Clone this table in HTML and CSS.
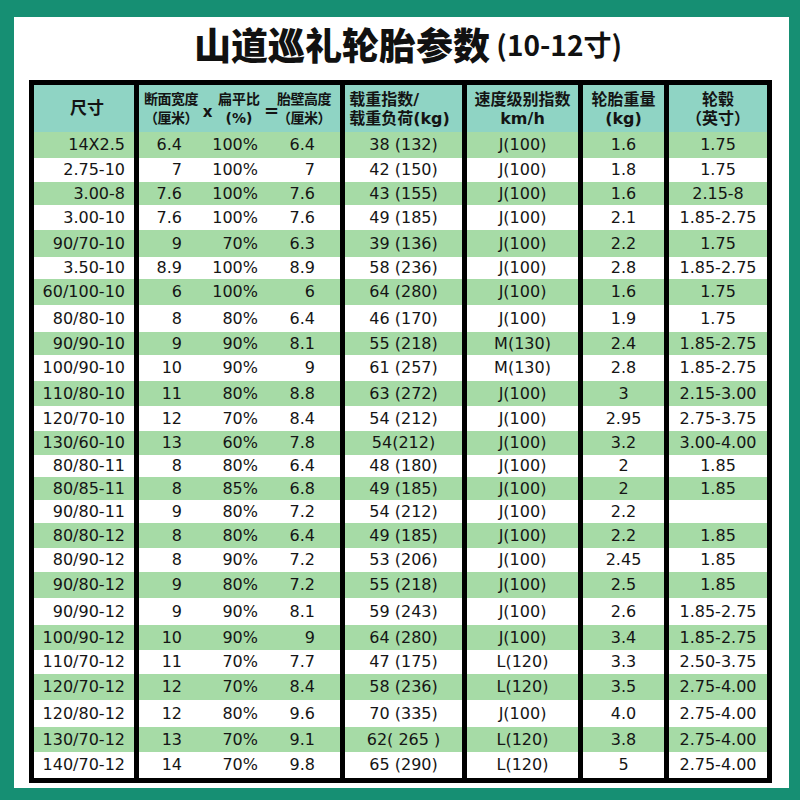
FILE: index.html
```html
<!DOCTYPE html>
<html lang="zh-CN">
<head>
<meta charset="utf-8">
<title>山道巡礼轮胎参数</title>
<link rel="stylesheet" href="styles.css">
</head>
<body>
<div class="card">
  <h1 class="title">山道巡礼轮胎参数<span class="sub"> (10-12寸)</span></h1>
  <div class="table">
    <div class="row head">
      <div class="c c1 hd"><span class="big">尺寸</span></div>
      <div class="c cg hd">
        <div class="lab l1">断面宽度<br>（厘米）</div>
        <div class="op opx">x</div>
        <div class="lab l2">扁平比<br>(%)</div>
        <div class="op opeq">=</div>
        <div class="lab l3">胎壁高度<br>（厘米）</div>
      </div>
      <div class="c c5 hd"><div class="lft">载重指数/<br>载重负荷(kg)</div></div>
      <div class="c c6 hd">速度级别指数<br>km/h</div>
      <div class="c c7 hd">轮胎重量<br>(kg)</div>
      <div class="c c8 hd">轮毂<br>（英寸）</div>
    </div>

    <div class="row g h26"><div class="c c1">14X2.5</div><div class="c c2">6.4</div><div class="c c3">100%</div><div class="c c4">6.4</div><div class="c c5">38 (132)</div><div class="c c6">J(100)</div><div class="c c7">1.6</div><div class="c c8">1.75</div></div>
    <div class="row h24"><div class="c c1">2.75-10</div><div class="c c2">7</div><div class="c c3">100%</div><div class="c c4">7</div><div class="c c5">42 (150)</div><div class="c c6">J(100)</div><div class="c c7">1.8</div><div class="c c8">1.75</div></div>
    <div class="row g h23"><div class="c c1">3.00-8</div><div class="c c2">7.6</div><div class="c c3">100%</div><div class="c c4">7.6</div><div class="c c5">43 (155)</div><div class="c c6">J(100)</div><div class="c c7">1.6</div><div class="c c8">2.15-8</div></div>
    <div class="row h25"><div class="c c1">3.00-10</div><div class="c c2">7.6</div><div class="c c3">100%</div><div class="c c4">7.6</div><div class="c c5">49 (185)</div><div class="c c6">J(100)</div><div class="c c7">2.1</div><div class="c c8">1.85-2.75</div></div>
    <div class="row g h27"><div class="c c1">90/70-10</div><div class="c c2">9</div><div class="c c3">70%</div><div class="c c4">6.3</div><div class="c c5">39 (136)</div><div class="c c6">J(100)</div><div class="c c7">2.2</div><div class="c c8">1.75</div></div>
    <div class="row h22"><div class="c c1">3.50-10</div><div class="c c2">8.9</div><div class="c c3">100%</div><div class="c c4">8.9</div><div class="c c5">58 (236)</div><div class="c c6">J(100)</div><div class="c c7">2.8</div><div class="c c8">1.85-2.75</div></div>
    <div class="row g h26"><div class="c c1">60/100-10</div><div class="c c2">6</div><div class="c c3">100%</div><div class="c c4">6</div><div class="c c5">64 (280)</div><div class="c c6">J(100)</div><div class="c c7">1.6</div><div class="c c8">1.75</div></div>
    <div class="row h27"><div class="c c1">80/80-10</div><div class="c c2">8</div><div class="c c3">80%</div><div class="c c4">6.4</div><div class="c c5">46 (170)</div><div class="c c6">J(100)</div><div class="c c7">1.9</div><div class="c c8">1.75</div></div>
    <div class="row g h23"><div class="c c1">90/90-10</div><div class="c c2">9</div><div class="c c3">90%</div><div class="c c4">8.1</div><div class="c c5">55 (218)</div><div class="c c6">M(130)</div><div class="c c7">2.4</div><div class="c c8">1.85-2.75</div></div>
    <div class="row h26"><div class="c c1">100/90-10</div><div class="c c2">10</div><div class="c c3">90%</div><div class="c c4">9</div><div class="c c5">61 (257)</div><div class="c c6">M(130)</div><div class="c c7">2.8</div><div class="c c8">1.85-2.75</div></div>
    <div class="row g h25"><div class="c c1">110/80-10</div><div class="c c2">11</div><div class="c c3">80%</div><div class="c c4">8.8</div><div class="c c5">63 (272)</div><div class="c c6">J(100)</div><div class="c c7">3</div><div class="c c8">2.15-3.00</div></div>
    <div class="row h25"><div class="c c1">120/70-10</div><div class="c c2">12</div><div class="c c3">70%</div><div class="c c4">8.4</div><div class="c c5">54 (212)</div><div class="c c6">J(100)</div><div class="c c7">2.95</div><div class="c c8">2.75-3.75</div></div>
    <div class="row g h24"><div class="c c1">130/60-10</div><div class="c c2">13</div><div class="c c3">60%</div><div class="c c4">7.8</div><div class="c c5">54(212)</div><div class="c c6">J(100)</div><div class="c c7">3.2</div><div class="c c8">3.00-4.00</div></div>
    <div class="row h22"><div class="c c1">80/80-11</div><div class="c c2">8</div><div class="c c3">80%</div><div class="c c4">6.4</div><div class="c c5">48 (180)</div><div class="c c6">J(100)</div><div class="c c7">2</div><div class="c c8">1.85</div></div>
    <div class="row g h23"><div class="c c1">80/85-11</div><div class="c c2">8</div><div class="c c3">85%</div><div class="c c4">6.8</div><div class="c c5">49 (185)</div><div class="c c6">J(100)</div><div class="c c7">2</div><div class="c c8">1.85</div></div>
    <div class="row h23"><div class="c c1">90/80-11</div><div class="c c2">9</div><div class="c c3">80%</div><div class="c c4">7.2</div><div class="c c5">54 (212)</div><div class="c c6">J(100)</div><div class="c c7">2.2</div><div class="c c8"></div></div>
    <div class="row g h25"><div class="c c1">80/80-12</div><div class="c c2">8</div><div class="c c3">80%</div><div class="c c4">6.4</div><div class="c c5">49 (185)</div><div class="c c6">J(100)</div><div class="c c7">2.2</div><div class="c c8">1.85</div></div>
    <div class="row h24"><div class="c c1">80/90-12</div><div class="c c2">8</div><div class="c c3">90%</div><div class="c c4">7.2</div><div class="c c5">53 (206)</div><div class="c c6">J(100)</div><div class="c c7">2.45</div><div class="c c8">1.85</div></div>
    <div class="row g h26"><div class="c c1">90/80-12</div><div class="c c2">9</div><div class="c c3">80%</div><div class="c c4">7.2</div><div class="c c5">55 (218)</div><div class="c c6">J(100)</div><div class="c c7">2.5</div><div class="c c8">1.85</div></div>
    <div class="row h27"><div class="c c1">90/90-12</div><div class="c c2">9</div><div class="c c3">90%</div><div class="c c4">8.1</div><div class="c c5">59 (243)</div><div class="c c6">J(100)</div><div class="c c7">2.6</div><div class="c c8">1.85-2.75</div></div>
    <div class="row g h25"><div class="c c1">100/90-12</div><div class="c c2">10</div><div class="c c3">90%</div><div class="c c4">9</div><div class="c c5">64 (280)</div><div class="c c6">J(100)</div><div class="c c7">3.4</div><div class="c c8">1.85-2.75</div></div>
    <div class="row h24"><div class="c c1">110/70-12</div><div class="c c2">11</div><div class="c c3">70%</div><div class="c c4">7.7</div><div class="c c5">47 (175)</div><div class="c c6">L(120)</div><div class="c c7">3.3</div><div class="c c8">2.50-3.75</div></div>
    <div class="row g h26"><div class="c c1">120/70-12</div><div class="c c2">12</div><div class="c c3">70%</div><div class="c c4">8.4</div><div class="c c5">58 (236)</div><div class="c c6">L(120)</div><div class="c c7">3.5</div><div class="c c8">2.75-4.00</div></div>
    <div class="row h27"><div class="c c1">120/80-12</div><div class="c c2">12</div><div class="c c3">80%</div><div class="c c4">9.6</div><div class="c c5">70 (335)</div><div class="c c6">J(100)</div><div class="c c7">4.0</div><div class="c c8">2.75-4.00</div></div>
    <div class="row g h25"><div class="c c1">130/70-12</div><div class="c c2">13</div><div class="c c3">70%</div><div class="c c4">9.1</div><div class="c c5">62( 265 )</div><div class="c c6">L(120)</div><div class="c c7">3.8</div><div class="c c8">2.75-4.00</div></div>
    <div class="row h26"><div class="c c1">140/70-12</div><div class="c c2">14</div><div class="c c3">70%</div><div class="c c4">9.8</div><div class="c c5">65 (290)</div><div class="c c6">L(120)</div><div class="c c7">5</div><div class="c c8">2.75-4.00</div></div>
  </div>
</div>
</body>
</html>
```

FILE: styles.css
```css
* { box-sizing: border-box; }

html, body {
  margin: 0;
  padding: 0;
}

body {
  width: 800px;
  height: 800px;
  background: #168f73;
  padding: 17px 11px 12px 14px;
  font-family: "DejaVu Sans", "Noto Sans CJK SC", sans-serif;
  color: #151515;
}

.card {
  width: 775px;
  height: 771px;
  background: #ffffff;
  padding: 0 0 0 15px;
}

.title {
  margin: 0;
  height: 63px;
  display: flex;
  align-items: center;
  justify-content: center;
  padding-left: 28px;
  padding-right: 30px;
  padding-bottom: 9px;
  font-family: "Noto Sans CJK SC", sans-serif;
  font-weight: 900;
  font-size: 37px;
  letter-spacing: 0;
  color: #111;
  white-space: pre;
}

.title .sub {
  font-size: 28px;
  font-weight: 700;
}

.table {
  width: 743px;
  border: 5px solid #000;
}

.row {
  display: grid;
  grid-template-columns: 105px 61px 65px 80px 122px 116px 86px 98px;
  background: #fff;
  font-size: 16px;
}

.row.g { background: #a6dba6; }

.c {
  display: flex;
  align-items: center;
  justify-content: center;
  white-space: pre;
  line-height: 1;
}

.c1, .c4, .c5, .c6, .c7 { border-right: 5px solid #000; }

.c1 { justify-content: flex-end; padding-right: 9px; }
.c2 { justify-content: flex-end; padding-right: 18px; }
.c3 { justify-content: flex-end; padding-right: 7px; }
.c4 { justify-content: flex-end; padding-right: 25px; }

/* header */
.row.head {
  height: 47px;
  background: #8fd4c4;
}

.hd {
  font-weight: 700;
  font-size: 16px;
  line-height: 19px;
  text-align: center;
  color: #141414;
}

.hd.c1 { justify-content: center; padding-right: 0; }
.big { font-size: 17px; padding-left: 6px; }

.cg {
  grid-column: span 3;
  border-right: 5px solid #000;
  justify-content: flex-start;
  padding-left: 2px;
}

.lab {
  font-size: 14px;
  line-height: 19px;
  text-align: center;
  white-space: nowrap;
}
.l1 { width: 60px; letter-spacing: -0.5px; }
.l2 { width: 50px; }
.l3 { width: 58px; letter-spacing: -0.5px; }

.op {
  font-size: 15px;
  font-weight: 700;
  text-align: center;
}
.opx { width: 13px; padding-top: 8px; }
.opeq { width: 11px; padding-top: 4px; font-size: 18px; }

.lft { text-align: left; padding-right: 8px; }

/* row heights */
.h22 { height: 22px; }
.h23 { height: 23px; }
.h24 { height: 24px; }
.h25 { height: 25px; }
.h26 { height: 26px; }
.h27 { height: 27px; }
```
